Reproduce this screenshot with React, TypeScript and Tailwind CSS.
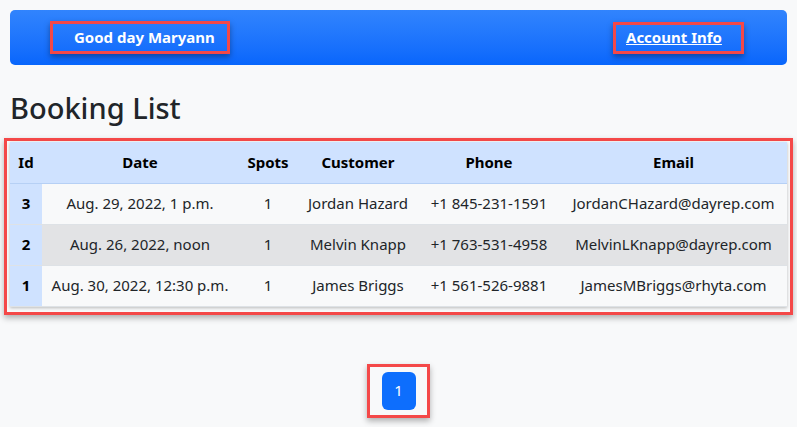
const bookings = [
  { id: 3, date: "Aug. 29, 2022, 1 p.m.", spots: 1, customer: "Jordan Hazard", phone: "+1 845-231-1591", email: "JordanCHazard@dayrep.com" },
  { id: 2, date: "Aug. 26, 2022, noon", spots: 1, customer: "Melvin Knapp", phone: "+1 763-531-4958", email: "MelvinLKnapp@dayrep.com" },
  { id: 1, date: "Aug. 30, 2022, 12:30 p.m.", spots: 1, customer: "James Briggs", phone: "+1 561-526-9881", email: "JamesMBriggs@rhyta.com" },
]

function App() {
  return (
    <div className="min-h-[427px] bg-[#f8f9fa] px-[10px] pt-[10px] text-[#212529] font-['Segoe_UI','Noto_Sans',sans-serif]">
      <nav className="flex h-[55px] items-center justify-between rounded-[5px] bg-gradient-to-b from-[#3184fd] to-[#0866fc] pl-[40px] pr-[43px]">
        <div className="flex h-[33px] w-[180px] items-center border-[3px] border-[#f44848] pl-[21px] shadow-[0_3px_6px_rgba(0,0,0,0.35)]">
          <span className="text-[15px] font-bold text-white">Good day Maryann</span>
        </div>
        <div className="flex h-[32px] w-[131px] items-center border-[3px] border-[#f44848] pl-[10px] shadow-[0_3px_6px_rgba(0,0,0,0.35)]">
          <a href="#" className="text-[15px] font-bold text-white underline">Account Info</a>
        </div>
      </nav>

      <h2 className="mt-[25px] text-[29px] font-medium leading-[36px]">Booking List</h2>

      <div className="-mx-[6px] mt-[12px] border-[3px] border-[#f44848] px-[3px] pt-[1px] pb-[5px] shadow-[0_3px_6px_rgba(0,0,0,0.3)]">
        <table className="w-full table-fixed border-collapse text-center text-[15px] shadow-[0_1px_3px_rgba(0,0,0,0.25)]">
          <colgroup>
            <col className="w-[32px]" />
            <col className="w-[196px]" />
            <col className="w-[60px]" />
            <col className="w-[120px]" />
            <col className="w-[142px]" />
            <col />
          </colgroup>
          <thead>
            <tr className="h-[41px] border-b border-[#b6d0f5] bg-[#cfe2ff] text-black">
              <th className="font-bold">Id</th>
              <th className="font-bold">Date</th>
              <th className="font-bold">Spots</th>
              <th className="font-bold">Customer</th>
              <th className="font-bold">Phone</th>
              <th className="font-bold">Email</th>
            </tr>
          </thead>
          <tbody>
            {bookings.map((b, i) => (
              <tr key={b.id} className={`h-[41px] border-b border-[#dee2e6] ${i === 1 ? "bg-[#e2e3e5]" : "bg-[#f8f9fa]"}`}>
                <th className="bg-[#cfe2ff] font-bold text-black">{b.id}</th>
                <td>{b.date}</td>
                <td>{b.spots}</td>
                <td>{b.customer}</td>
                <td>{b.phone}</td>
                <td>{b.email}</td>
              </tr>
            ))}
          </tbody>
        </table>
      </div>

      <div className="mt-[49px] flex justify-center">
        <div className="flex h-[54px] w-[63px] items-center justify-center border-[3px] border-[#f44848] shadow-[0_3px_6px_rgba(0,0,0,0.3)]">
          <button className="flex h-[38px] w-[34px] items-center justify-center rounded-[6px] bg-[#0d6efd] text-[15px] text-white">1</button>
        </div>
      </div>
    </div>
  )
}

export default App
